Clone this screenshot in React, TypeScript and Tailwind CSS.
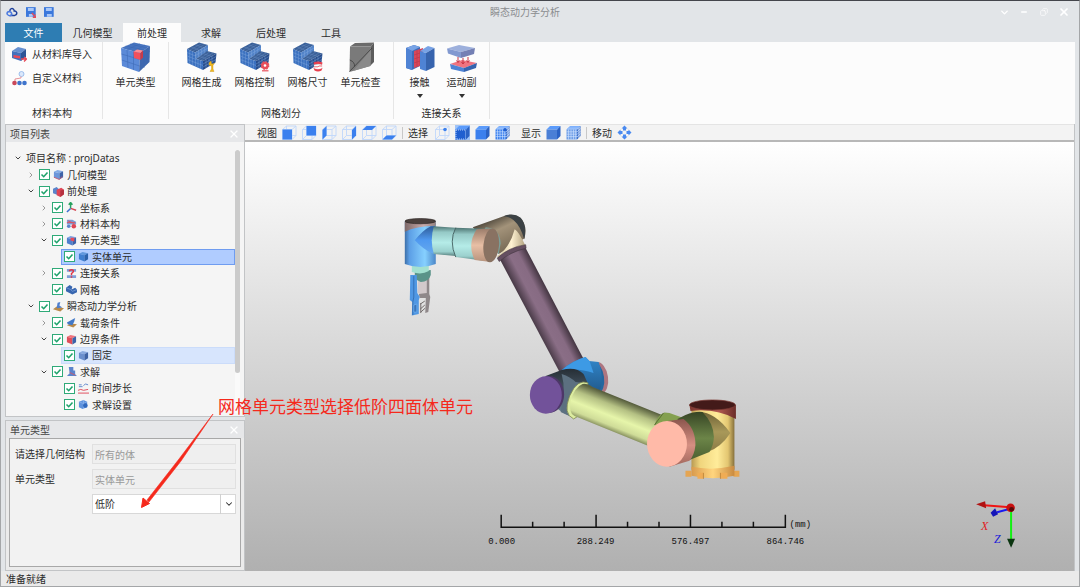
import React, { useState } from 'react';
import { ChevronDown, ChevronRight, Minus, Copy, X } from 'lucide-react';

type Face = 'front' | 'back' | 'left' | 'right' | 'top' | 'bottom';

const FACES: Record<Face, string> = {
  front: '0.5,4.5 10,4.5 10,14.5 0.5,14.5',
  back: '4.5,1 14,1 14,10.5 4.5,10.5',
  left: '0.5,5 4.5,1 4.5,10.5 0.5,14.5',
  right: '10,5 14,1 14,10.5 10,14.5',
  top: '0.5,5 4.5,1 14,1 10,5',
  bottom: '0.5,14.5 4.5,10.5 14,10.5 10,14.5',
};

const WireCube: React.FC<{ face?: Face; dot?: boolean }> = ({ face, dot }) => (
  <svg viewBox="0 0 15 15" className="w-[15px] h-[15px]">
    <path
      d="M.5 4.5H10V14.5H.5ZM4.5 1H14V10.5H4.5ZM.5 4.5L4.5 1M10 4.5L14 1M.5 14.5L4.5 10.5M10 14.5L14 10.5"
      fill="none"
      stroke="#bfd7fb"
      strokeWidth=".9"
    />
    {face && <polygon points={FACES[face]} fill="#3b80ee" />}
    {dot && <circle cx="10" cy="4.5" r="1.8" fill="#3b80ee" />}
  </svg>
);

const SolidCube: React.FC<{ front?: string; mesh?: boolean; dashed?: boolean; dot?: boolean }> = ({
  front = '#3b80ee',
  mesh,
  dashed,
  dot,
}) => (
  <svg viewBox="0 0 15 15" className="w-[15px] h-[15px]">
    <path d="M.5 4.5L4 1H14.5L11 4.5Z" fill="#5b9bfb" />
    <path d="M11 4.5L14.5 1V11L11 14.5Z" fill="#2a62c4" />
    <path d="M.5 4.5H11V14.5H.5Z" fill={front} />
    {mesh && (
      <path
        d="M2.5 4.5V14.5M5 4.5V14.5M7.5 4.5V14.5M9.7 4.5V14.5M.5 6.8H11M.5 9.2H11M.5 11.6H11M3 2H13.5M2 3.3H12.5M11 7L14.5 3.5M11 9.5L14.5 6M11 12L14.5 8.5M12.3 3V13M13.4 2V12"
        stroke="#d5e5ff"
        strokeWidth=".6"
      />
    )}
    {dashed && <path d="M1 5H10.5V14H1Z" fill="none" stroke="#cfe2ff" strokeWidth=".8" strokeDasharray="1 1" />}
    {dot && <circle cx="10" cy="4.8" r="1.7" fill="#1f5fd0" />}
  </svg>
);

const MoveIcon = () => (
  <svg viewBox="0 0 15 15" className="w-[15px] h-[15px]" fill="#4a8af0">
    <path d="M7.5.5L10.5 3.5H9V5.5H6V3.5H4.5ZM7.5 14.5L4.5 11.5H6V9.5H9V11.5H10.5ZM.5 7.5L3.5 4.5V6H5.5V9H3.5V10.5ZM14.5 7.5L11.5 10.5V9H9.5V6H11.5V4.5Z" />
  </svg>
);

const ElementTypeIcon = () => (
  <svg viewBox="0 0 30 30" className="w-[30px] h-[30px]">
    <path d="M0 6L13 .5L29 4L19 11Z" fill="#4774bf" />
    <path d="M0 6L19 11L18 30L1 24Z" fill="#5b8ad8" />
    <path d="M19 11L29 4L28.500 20L18 30Z" fill="#3f68ae" />
    <path d="M.5 12L19 17.500L29 9M.8 18L18.500 24L28.500 15M6 7.500L7 26M12.500 9.500V28M4.500 4L23 8V26M9 2L26 6V22M6 7.500L19 1.800M12.500 9.500L24 3" fill="none" stroke="#3a67b3" strokeWidth=".5" />
    <path d="M12.500 9.500L16 7.500L22 8.500L19.500 11Z" fill="#ff8c92" />
    <path d="M12.500 9.500L19.500 11V18L13 16Z" fill="#f4505c" />
    <path d="M19.500 11L22 8.500V15.500L19.500 18Z" fill="#c93a48" />
  </svg>
);

const MeshIcon: React.FC<{ badge: 'tool' | 'gear' | 'size' }> = ({ badge }) => (
  <svg viewBox="0 0 30 30" className="w-[30px] h-[30px]">
    <path d="M0 7L12 .5L21 3L8 10.500Z" fill="#3a6098" />
    <path d="M8 10.500L21 3V9L9 17Z" fill="#5283c8" />
    <path d="M9 17L20 9L29.500 11.500L16 19Z" fill="#3a6098" />
    <path d="M0 7L8 10.500L9 17L16 19V28L.5 21Z" fill="#3a70bf" />
    <path d="M16 19L29.500 11.500L28.500 20.500L16 28Z" fill="#274d8c" />
    <path
      d="M0 10.500L8.500 14M.2 14L9 17.500M.4 17.500L16 23.500M2.700 8.200V22M5.400 9.400V23.200M8.500 15V24.600M11 17.600V25.700M13.500 18.300V26.900M16 22L29 14.500M16 25L29 17.500M19 17.400V26.200M22 15.700V24.400M25 14V22.600M11.500 8.500V15.300M14.500 6.800V13.300M17.700 5V11.300M8.300 13.600L21 6"
      fill="none"
      stroke="#86abe0"
      strokeWidth=".4"
    />
    <path
      d="M4 4.800L12 8.200M8 2.600L16.500 5.800M2.700 8.200L15 1.400M5.400 9.400L18 2.200M12.500 14.500L20 16.800M16.200 11.800L24.500 14.200M11.300 17.600L23 9.800M13.600 18.300L26.500 10.700"
      fill="none"
      stroke="#6c8fc4"
      strokeWidth=".4"
    />
    {badge === 'tool' && (
      <path d="M24 19Q21.500 20 22 23L24.500 24V27L23 29.500H27L26 27V23.500L27.500 21L26 22L24.500 21.500Z" fill="#f2b91d" stroke="#c48f10" strokeWidth=".4" />
    )}
    {badge === 'gear' && (
      <g>
        <circle cx="25" cy="23.500" r="3.800" fill="#e8505c" />
        <circle cx="25" cy="23.500" r="3.800" fill="none" stroke="#e8505c" strokeWidth="1.200" strokeDasharray="1.500 1.500" />
        <circle cx="25" cy="23.500" r="1.300" fill="#fff" />
        <path d="M22 28.800H28.500" stroke="#e8505c" strokeWidth="1.200" />
      </g>
    )}
    {badge === 'size' && (
      <g>
        <path d="M20.500 20.500Q25 18.500 29.500 20.500L29 23Q25 21.500 21 23Z" fill="#e8404e" />
        <path d="M21 23Q25 21.500 29 23V26.500Q25 28 21 26.500Z" fill="#fff" stroke="#d8d8d8" strokeWidth=".4" />
        <path d="M21 24.800H25L26 24H29" fill="none" stroke="#e8404e" strokeWidth=".8" />
        <path d="M20.500 26Q25 28.500 29.500 26L28.500 28.500Q25 30.500 21.500 28.500Z" fill="#e8404e" />
      </g>
    )}
  </svg>
);

const CheckElementIcon = () => (
  <svg viewBox="0 0 30 30" className="w-[30px] h-[30px]">
    <path d="M4 4.500L9 1L28 .5L25 4.500Z" fill="#6b6b6b" />
    <path d="M4 4.500L25 4.500L24 24L3.500 30Z" fill="#7a7a7a" />
    <path d="M25 4.500L28 .5V20L24 24Z" fill="#5c5c5c" />
    <path d="M24.500 8V24L7 29Z" fill="#8a8a8a" />
    <path d="M26 6L3.500 29.500M3.800 18Q9 20 8.500 24.500" fill="none" stroke="#3d3d3d" strokeWidth=".8" />
  </svg>
);

const ContactIcon = () => (
  <svg viewBox="0 0 30 30" className="w-[30px] h-[30px]">
    <path d="M1 6L9 3L15 5V24L7 28L1 26Z" fill="#3f6cb8" />
    <path d="M1 6L9 3L15 5L7 9Z" fill="#78a3e6" />
    <path d="M1 6L7 9V28L1 26Z" fill="#4f83d4" />
    <path d="M9 9L18 6V23L9 26Z" fill="#d8475a" />
    <path d="M9 13L18 10M9 17L18 14M9 21L18 18M12 8V25M15 7V24" stroke="#b13447" strokeWidth=".5" />
    <path d="M15 9L23 4L29.500 6L21 11Z" fill="#78a3e6" />
    <path d="M15 9L21 11V29L15 27Z" fill="#4f83d4" />
    <path d="M21 11L29.500 6V25L21 29Z" fill="#3764ae" />
  </svg>
);

const JointIcon = () => (
  <svg viewBox="0 0 30 30" className="w-[30px] h-[30px]">
    <path d="M0 6.500L12 3L28 6L14 10Z" fill="#9db0dc" />
    <path d="M0 6.500L14 10V16L1 11.500Z" fill="#8299d0" />
    <path d="M14 10L28 6L27 12L14 16Z" fill="#7480b4" />
    <path d="M3 22L15 18L30 21L17 26Z" fill="#f07480" />
    <path d="M3 22L17 26V30L4 27Z" fill="#4f83d4" />
    <path d="M17 26L30 21L29 26L17 30Z" fill="#3764ae" />
    <path d="M11 15V20M16 16V22M21 15V20M9.500 18.500L11 20.500L12.500 18.500M14.500 20L16 22L17.500 20M19.500 18.500L21 20.500L22.500 18.500" fill="none" stroke="#c93444" strokeWidth="1" />
  </svg>
);

const LibraryIcon = () => (
  <svg viewBox="0 0 15 15" className="w-[15px] h-[15px]">
    <path d="M0 4L6 0L14 2L9 6Z" fill="#6690d0" />
    <path d="M0 4L9 6V14L0 11Z" fill="#4371bd" />
    <path d="M9 6L14 2V10L9 14Z" fill="#2d5597" />
    <path d="M1.500 8L8 9V11.500L1.500 10.500Z" fill="#e84a58" />
    <path d="M9 12H14M12 10L14.500 12L12 14.500" fill="none" stroke="#e84a58" strokeWidth="1.300" />
  </svg>
);

const CustomMaterialIcon = () => (
  <svg viewBox="0 0 15 15" className="w-[15px] h-[15px]">
    <circle cx="9.500" cy="3" r="2.500" fill="#dbe8fb" stroke="#8db4ea" strokeWidth=".8" />
    <path d="M9 5.500V7L3 8V10" fill="none" stroke="#e07a80" strokeWidth=".8" />
    <circle cx="2.500" cy="12" r="2.300" fill="#c9485a" />
    <circle cx="7.500" cy="12" r="2.300" fill="#3f74cc" />
    <circle cx="12.500" cy="12" r="2.300" fill="#3f74cc" />
  </svg>
);

type TreeKind =
  | 'geometry' | 'pre' | 'axes' | 'material' | 'element' | 'solid' | 'link' | 'mesh'
  | 'transient' | 'load' | 'boundary' | 'fixed' | 'solve' | 'time' | 'settings';

const MiniCube: React.FC<{ left: string; right: string; top: string }> = ({ left, right, top }) => (
  <g>
    <path d="M1 3L5 1L11 2.500L7 4.500Z" fill={top} />
    <path d="M1 3L7 4.500V11.500L1 9Z" fill={left} />
    <path d="M7 4.500L11 2.500V9L7 11.500Z" fill={right} />
  </g>
);

const treeGlyphs: Record<TreeKind, React.ReactNode> = {
  geometry: (
    <g>
      <MiniCube left="#6d96da" right="#3c63a8" top="#86abe6" />
      <path d="M1 9L7 11.500L10 8" fill="none" stroke="#c9566e" />
    </g>
  ),
  pre: (
    <g>
      <path d="M0 3L4 1L6 3V10L0 8Z" fill="#5b84cc" />
      <path d="M4 4L9 2L12 4V9L8 12L4 10Z" fill="#df4555" />
      <path d="M8 5L12 4V9L8 12Z" fill="#b5303f" />
    </g>
  ),
  axes: (
    <g fill="none" strokeWidth="1.600">
      <path d="M5 7V1M3 3L5 .5L7 3" stroke="#27a05e" />
      <path d="M5 7L11 9" stroke="#d54754" />
      <path d="M5 7L1 11" stroke="#3b6fd0" />
    </g>
  ),
  material: (
    <g>
      <path d="M1 2H7L11 4V7H1Z" fill="#7c9cd6" />
      <path d="M2 3L9 6M1 5H10" stroke="#dc5260" />
      <circle cx="3" cy="9" r="2" fill="#5b84cc" />
      <circle cx="8.500" cy="9" r="2.500" fill="#df4555" />
    </g>
  ),
  element: (
    <g>
      <MiniCube left="#4f7fce" right="#3b62a9" top="#7ba3e4" />
      <path d="M5 3L9 3V7L5 6Z" fill="#e84a58" />
    </g>
  ),
  solid: <MiniCube left="#3f7fd0" right="#2b62ab" top="#6098dd" />,
  link: (
    <g>
      <path d="M1 1H11V4H1ZM1 8H11V11H1Z" fill="#7f9fd9" />
      <path d="M3.500 3.500Q4 2 6 2Q8.500 2 8 4Q7.500 5 6 6V8M6 9V10.500" fill="none" stroke="#df3545" strokeWidth="1.600" />
    </g>
  ),
  mesh: (
    <g>
      <path d="M0 4L4 1L7 3L6 6L10 4L12 6V9L7 11.500L0 8Z" fill="#3866b0" />
      <path d="M0 4L5 6L7 8L12 6" fill="none" stroke="#84a7df" strokeWidth=".7" />
    </g>
  ),
  transient: (
    <g>
      <path d="M0 9L4 6L12 8L8 11.500Z" fill="#b98a4a" />
      <path d="M5 2L8 1L7 5L10 7L4 8Z" fill="#4f7fce" />
    </g>
  ),
  load: (
    <g>
      <path d="M1 9L5 7L12 8L8 11.500Z" fill="#b98a4a" />
      <path d="M1 6L10 1L9 5L7 9L2 8Z" fill="#4278c8" />
    </g>
  ),
  boundary: <MiniCube left="#e04d5a" right="#3b62a9" top="#f0737d" />,
  fixed: <MiniCube left="#6b8fce" right="#3f62a4" top="#89a9df" />,
  solve: (
    <g>
      <path d="M3 1H8V5H10V9L12 11H1L4 8Z" fill="#5b84cc" />
      <path d="M4 7L10 10" stroke="#cc5a6a" />
    </g>
  ),
  time: (
    <g>
      <path d="M1 2H4M6 3L8 1L11 2M1 4H5" fill="none" stroke="#5b84cc" />
      <path d="M0 8L3 7L6 8L11 7M0 11H12" fill="none" stroke="#df4555" />
    </g>
  ),
  settings: (
    <g>
      <path d="M1 3L6 1L10 3V9L5 11L1 9Z" fill="#5f93de" />
      <path d="M6 1V11M1 3L6 5L10 3" fill="none" stroke="#9dc0f2" strokeWidth=".6" />
      <circle cx="8" cy="7" r="2.500" fill="#3068bd" />
    </g>
  ),
};

interface TreeRow {
  label: string;
  level: 1 | 2 | 3;
  kind: TreeKind;
  arrow?: 'open' | 'closed';
  state?: 'selected' | 'hover';
}

const treeRows: TreeRow[] = [
  { label: '几何模型', level: 1, kind: 'geometry', arrow: 'closed' },
  { label: '前处理', level: 1, kind: 'pre', arrow: 'open' },
  { label: '坐标系', level: 2, kind: 'axes', arrow: 'closed' },
  { label: '材料本构', level: 2, kind: 'material', arrow: 'closed' },
  { label: '单元类型', level: 2, kind: 'element', arrow: 'open' },
  { label: '实体单元', level: 3, kind: 'solid', state: 'selected' },
  { label: '连接关系', level: 2, kind: 'link', arrow: 'closed' },
  { label: '网格', level: 2, kind: 'mesh' },
  { label: '瞬态动力学分析', level: 1, kind: 'transient', arrow: 'open' },
  { label: '载荷条件', level: 2, kind: 'load', arrow: 'closed' },
  { label: '边界条件', level: 2, kind: 'boundary', arrow: 'open' },
  { label: '固定', level: 3, kind: 'fixed', state: 'hover' },
  { label: '求解', level: 2, kind: 'solve', arrow: 'open' },
  { label: '时间步长', level: 3, kind: 'time' },
  { label: '求解设置', level: 3, kind: 'settings' },
];

const levelClass = { 1: 'ml-[18px]', 2: 'ml-[31px]', 3: 'ml-[55px] pl-[2px]' };

const TreeItem: React.FC<{ row: TreeRow }> = ({ row }) => {
  const [checked, setChecked] = useState(true);
  const Arrow = row.arrow === 'open' ? ChevronDown : ChevronRight;
  const stateClass =
    row.state === 'selected'
      ? 'bg-[#b0ccff] border-[#6f9cf0]'
      : row.state === 'hover'
        ? 'bg-[#d7e5fd] border-[#cbdcfa]'
        : 'border-transparent';
  return (
    <li className={`flex items-center gap-[3px] border ${levelClass[row.level]} ${stateClass}`}>
      {row.level < 3 && (
        <span className="w-[11px] flex justify-center shrink-0">
          {row.arrow && (
            <Arrow className={row.arrow === 'open' ? 'w-2 h-2 text-[#444]' : 'w-2 h-2 text-[#999]'} strokeWidth={3} />
          )}
        </span>
      )}
      <label className="flex items-center gap-[3px]">
        <span className="relative w-[11px] h-[11px] shrink-0">
          <input
            type="checkbox"
            checked={checked}
            onChange={() => setChecked(!checked)}
            className="block appearance-none w-[11px] h-[11px] border border-[#2faa78] bg-white"
          />
          {checked && (
            <svg viewBox="0 0 11 11" className="absolute inset-0 pointer-events-none">
              <path d="M2.500 5.500L4.700 7.700L8.500 3.500" fill="none" stroke="#1fa36c" strokeWidth="1.600" />
            </svg>
          )}
        </span>
        <svg viewBox="0 0 12 12" className="w-[11px] h-[11px] shrink-0">
          {treeGlyphs[row.kind]}
        </svg>
        <span>{row.label}</span>
      </label>
    </li>
  );
};

const PanelHeader: React.FC<{ title: string }> = ({ title }) => (
  <div className="h-[17px] shrink-0 flex items-center justify-between pl-1 pr-1 bg-[#e6e7e9]">
    <h2 className="text-[#444]">{title}</h2>
    <button aria-label={`关闭${title}`} className="text-white">
      <X className="w-3 h-3" strokeWidth={2.5} />
    </button>
  </div>
);

const RibbonButton: React.FC<{ label: string; icon: React.ReactNode; menu?: boolean; width?: string }> = ({
  label,
  icon,
  menu,
  width = 'w-[53px]',
}) => (
  <button className={`flex flex-col items-center ${width}`}>
    {icon}
    <span className="leading-5">{label}</span>
    {menu && (
      <svg viewBox="0 0 6 4" className="w-[6px] h-1 mt-[2px]">
        <path d="M0 0H6L3 4Z" fill="#333" />
      </svg>
    )}
  </button>
);

const RibbonGroup: React.FC<{ title?: string; className: string; children: React.ReactNode }> = ({
  title,
  className,
  children,
}) => (
  <section className={`h-[77px] flex flex-col justify-between border-r border-[#e6e6e6] ${className}`}>
    {children}
    {title && <p className="text-center leading-3">{title}</p>}
  </section>
);

const tabs = [
  { label: '文件', className: 'w-[57px] bg-[#2e7db3] text-white' },
  { label: '几何模型', className: 'w-[61px]' },
  { label: '前处理', className: 'w-[58px] bg-[#fcfcfc]' },
  { label: '求解', className: 'w-[60px]' },
  { label: '后处理', className: 'w-[60px]' },
  { label: '工具', className: 'w-[60px]' },
];

const viewFaces: { label: string; face: Face }[] = [
  { label: '前视图', face: 'front' },
  { label: '后视图', face: 'back' },
  { label: '左视图', face: 'left' },
  { label: '右视图', face: 'right' },
  { label: '俯视图', face: 'top' },
  { label: '仰视图', face: 'bottom' },
];

const Scene = () => (
  <svg viewBox="245 142 830 429" className="absolute inset-0 w-full h-full" role="img" aria-label="机械臂模型">
    <defs>
      <linearGradient id="head" x1="0" x2="1">
        <stop offset="0" stopColor="#3d6fa8" />
        <stop offset=".15" stopColor="#5c9fe6" />
        <stop offset=".65" stopColor="#86d0ff" />
        <stop offset="1" stopColor="#4b86c8" />
      </linearGradient>
      <linearGradient id="headBand" x1="0" x2="1">
        <stop offset="0" stopColor="#7d6868" />
        <stop offset=".6" stopColor="#c9abaa" />
        <stop offset="1" stopColor="#94807d" />
      </linearGradient>
      <linearGradient id="teal" x1="0" y1="0" x2="0" y2="1">
        <stop offset="0" stopColor="#4d7472" />
        <stop offset=".2" stopColor="#95c9c6" />
        <stop offset=".55" stopColor="#b5ece8" />
        <stop offset=".85" stopColor="#9bd0cd" />
        <stop offset="1" stopColor="#567d7b" />
      </linearGradient>
      <linearGradient id="flare" x1="0" y1="0" x2="0" y2="1">
        <stop offset="0" stopColor="#2f5c98" />
        <stop offset=".5" stopColor="#4f99f0" />
        <stop offset="1" stopColor="#66a9ee" />
      </linearGradient>
      <linearGradient id="tan" x1="0" y1="0" x2="0" y2="1">
        <stop offset="0" stopColor="#9a7b69" />
        <stop offset=".5" stopColor="#e8bfa5" />
        <stop offset="1" stopColor="#b7927c" />
      </linearGradient>
      <linearGradient id="elbow" gradientUnits="userSpaceOnUse" x1="492" y1="216" x2="508" y2="250">
        <stop offset="0" stopColor="#453f35" />
        <stop offset=".4" stopColor="#a3937a" />
        <stop offset="1" stopColor="#786a55" />
      </linearGradient>
      <linearGradient id="cream" x1="0" x2="1">
        <stop offset="0" stopColor="#d5c59f" />
        <stop offset=".5" stopColor="#fff2d2" />
        <stop offset="1" stopColor="#b0a07e" />
      </linearGradient>
      <linearGradient id="upper" gradientUnits="userSpaceOnUse" x1="530" y1="315" x2="555" y2="302">
        <stop offset="0" stopColor="#4b3c49" />
        <stop offset=".35" stopColor="#8a6e86" />
        <stop offset=".65" stopColor="#876b83" />
        <stop offset="1" stopColor="#3f323d" />
      </linearGradient>
      <linearGradient id="lower" gradientUnits="userSpaceOnUse" x1="621" y1="399" x2="608" y2="432">
        <stop offset="0" stopColor="#59603f" />
        <stop offset=".25" stopColor="#b4c083" />
        <stop offset=".55" stopColor="#e6f5aa" />
        <stop offset=".8" stopColor="#cfdc98" />
        <stop offset="1" stopColor="#6a7248" />
      </linearGradient>
      <linearGradient id="slate" x1="0" y1="0" x2="0" y2="1">
        <stop offset="0" stopColor="#262e35" />
        <stop offset=".6" stopColor="#516474" />
        <stop offset="1" stopColor="#6c8496" />
      </linearGradient>
      <linearGradient id="blueJoint" x1="0" y1="0" x2="0" y2="1">
        <stop offset="0" stopColor="#3388cc" />
        <stop offset="1" stopColor="#20598c" />
      </linearGradient>
      <linearGradient id="olive" x1="0" y1="0" x2="0" y2="1">
        <stop offset="0" stopColor="#364424" />
        <stop offset=".55" stopColor="#6c8548" />
        <stop offset="1" stopColor="#4c6031" />
      </linearGradient>
      <linearGradient id="khaki" x1="0" y1="0" x2="0" y2="1">
        <stop offset="0" stopColor="#6e6236" />
        <stop offset=".5" stopColor="#a89859" />
        <stop offset="1" stopColor="#8a7b45" />
      </linearGradient>
      <linearGradient id="base" x1="0" x2="1">
        <stop offset="0" stopColor="#b99a52" />
        <stop offset=".2" stopColor="#f0d57d" />
        <stop offset=".6" stopColor="#ffec9a" />
        <stop offset=".85" stopColor="#e3c671" />
        <stop offset="1" stopColor="#86703b" />
      </linearGradient>
      <linearGradient id="foot" x1="0" x2="1">
        <stop offset="0" stopColor="#d99a4c" />
        <stop offset=".5" stopColor="#ffd57e" />
        <stop offset="1" stopColor="#c98a40" />
      </linearGradient>
      <linearGradient id="cap" x1="0" x2="1">
        <stop offset="0" stopColor="#7c352f" />
        <stop offset=".6" stopColor="#b55c53" />
        <stop offset="1" stopColor="#6b2d29" />
      </linearGradient>
      <linearGradient id="disc" x1="0" y1="0" x2="0" y2="1">
        <stop offset="0" stopColor="#8b554d" />
        <stop offset=".55" stopColor="#d68f82" />
        <stop offset="1" stopColor="#9f665c" />
      </linearGradient>
    </defs>

    {/* gripper */}
    <path d="M418 281L427 279L427.500 295L424 296L418 293Z" fill="#d2c9cb" />
    <path d="M427 273L429.500 274V294L430.500 297L428.500 312L425.500 313L426 298L420 298L419 294L427 293Z" fill="#8f888a" />
    <path d="M420.500 304L425 301M420.500 309L425 305M421 312L425.500 308M421 303V313" stroke="#66605f" strokeWidth=".9" />
    <path d="M415 272L431 270L431 275Q429 282 421 282L415 279Z" fill="#5a9389" />
    <path d="M412 266H429V271Q422 275 412 272Z" fill="#a3e0d0" />
    <path d="M410.500 275L417 275L417.500 293L420 297L419 300V314L412 315.500L412.500 302L410 300Z" fill="#4f97e3" />
    <path d="M414 276V297L413 302V315" fill="none" stroke="#2e66a8" strokeWidth=".8" />
    <path d="M414 305L417 304V312L414 312Z" fill="#3a75bc" stroke="#79b9f7" strokeWidth=".6" />

    {/* wrist */}
    <path d="M405 221H436V264Q420.500 270 405 264Z" fill="url(#head)" />
    <path d="M405 221H436V225.500Q416 226 405 231.500Z" fill="url(#headBand)" />
    <ellipse cx="420.500" cy="221" rx="15.300" ry="2.600" fill="#4b403d" stroke="#2f2827" strokeWidth=".7" />
    <path d="M415 240Q423 230 431 226H435Q431 240 434 254Q423 249 415 240Z" fill="url(#flare)" />

    {/* elbow */}
    <path d="M473 227L501 217Q511 212 520 217Q528 224 525 238L499 254Z" fill="url(#elbow)" />
    <path d="M504 216Q514 212 521 217.500Q528 225 524.500 239Q521 226 514 220Q509 216 504 216Z" fill="#3b4144" />
    <path d="M486 227Q500 228 501 243L499 254L478 240Z" fill="#7c9f98" />
    <path d="M515 229Q519 231 526 246L522 249Q510 251 499 259L497.500 256Q510 248 515 229Z" fill="url(#cream)" />

    {/* forearm */}
    <path d="M434 226L456 227.500V256L434 254Q430 240 434 226Z" fill="url(#teal)" />
    <path d="M456 227.500L485 228.500L486 261L456 257Q449 242 456 227.500Z" fill="url(#teal)" />
    <path d="M456 227.500Q449 241 456 257" fill="none" stroke="#425e5d" strokeWidth=".9" />
    <path d="M477 229L491 228.300V262L475 260Q467 244 477 229Z" fill="url(#tan)" />
    <ellipse cx="491.500" cy="245.300" rx="7.800" ry="17" fill="#897262" transform="rotate(5 491.500 245.300)" />

    {/* upper arm */}
    <path d="M500 259L525 246L584 359L561 374Z" fill="url(#upper)" />
    <path d="M497.500 258Q509 247 526 244.500L526.500 248Q510 252 499.500 261.500Z" fill="#654f61" stroke="#3c303a" strokeWidth=".5" />

    {/* middle joint */}
    <ellipse cx="599.500" cy="378" rx="9" ry="16" fill="#ae7680" transform="rotate(-8 599.500 378)" />
    <ellipse cx="596.500" cy="378" rx="8" ry="15.500" fill="#25679f" transform="rotate(-8 596.500 378)" />
    <path d="M561 371Q571 361 586 357L589.500 361L599 362Q604 374 601 389L597 393L580 389Z" fill="url(#blueJoint)" />
    <path d="M586 357L590 361L594 373Q577 367 561 371Q572 361 586 357Z" fill="#3d9ae5" />
    <path d="M546 376L562 370Q576 366 584 374L588 383L575 417Q565 415 557 408Z" fill="url(#slate)" />
    <path d="M562 374Q571 377 576 382L584 383L574 418L561 412Q567 392 562 374Z" fill="#5c7080" />
    <ellipse cx="549.500" cy="394.500" rx="15" ry="18.500" fill="#4d3768" />
    <ellipse cx="546.200" cy="395" rx="16" ry="18.700" fill="#72529a" />

    {/* lower arm */}
    <path d="M588.500 383Q578 378 570 396Q563 414 574 419L579 416L588 386Z" fill="#dceca0" stroke="#7d8753" strokeWidth=".8" />
    <path d="M583 384Q575 387 571 401Q569 414 575 416L649 446L665 416L593 387Q587 383 583 384Z" fill="url(#lower)" />

    {/* base */}
    <path d="M686 471H692V477H686ZM734 471H740V477H734Z" fill="#e5a552" />
    <path d="M692 406H735V470H692Z" fill="url(#base)" />
    <path d="M692 467Q713 471 735 466V476Q713 481 692 476Z" fill="url(#foot)" />
    <path d="M698 473H704V479H698ZM721 473H728V479H721Z" fill="#efac55" />
    <path d="M704 473V479M721 473V479" stroke="#b07a34" strokeWidth=".7" />
    <path d="M690 405H736.500V419Q716 408 691 411Z" fill="url(#cap)" />
    <ellipse cx="713" cy="405" rx="23" ry="5" fill="#431a19" stroke="#7c3b36" strokeWidth=".7" />
    <path d="M698 412Q715 411 731 433Q721 448 708 452L700 448Z" fill="url(#khaki)" />
    <path d="M655 425Q658 415 665 412.500L670 413L684 418L678 440Z" fill="#84a04f" />
    <path d="M655 425L664 413" stroke="#4e6030" strokeWidth=".8" />
    <path d="M678 419L686 415Q696 411 703 412Q714 423 714.500 437Q714 446 710 452L690 460Z" fill="url(#olive)" />
    <path d="M668 421L684 419Q696 428 696 445Q695 455 690 461L670 467Z" fill="url(#disc)" />
    <ellipse cx="667.500" cy="444" rx="20" ry="22.800" fill="#ffbaa8" />

    {/* scale */}
    <path
      d="M501.500 515V527.500H786V515M596.500 515V527M691 515V527M533 522V527M564.500 522V527M628 522V527M659.500 522V527M722.500 522V527M754 522V527"
      fill="none"
      stroke="#111"
      strokeWidth="1.500"
    />
    <g className="font-['Liberation_Mono',monospace] text-[9px]" fill="#111" textAnchor="middle">
      <text x="502" y="544">0.000</text>
      <text x="596" y="544">288.249</text>
      <text x="691" y="544">576.497</text>
      <text x="786" y="544">864.746</text>
      <text x="801" y="527">(mm)</text>
    </g>

    {/* axis triad */}
    <path d="M1012 509V540" stroke="#12f012" strokeWidth="2" />
    <path d="M1008 539H1016L1012 548Z" fill="#0b3510" />
    <path d="M1011 509L998 512.500" stroke="#1818f0" strokeWidth="2" />
    <path d="M991.500 513L996 508.500L999 514.500L994 517Z" fill="#1414b8" />
    <path d="M1011 507.500L985 505.500" stroke="#f01414" strokeWidth="2" />
    <path d="M977 504.500L986 501.500L987 508.500Z" fill="#b01212" />
    <circle cx="1011.500" cy="508" r="4.300" fill="#c81010" />
    <circle cx="1012.500" cy="509.500" r="2.400" fill="#5a0808" />
    <g className="font-['Liberation_Serif',serif] text-[12px] italic">
      <text x="982" y="530" fill="#e02020">X</text>
      <text x="995" y="543" fill="#2020d8">Z</text>
    </g>
  </svg>
);

const ToolSeparator = () => <span className="w-px h-3 bg-[#c8c8c8]" />;

export default function App() {
  return (
    <div className="relative min-h-screen flex flex-col px-1 border border-[#a4a6a8] border-t-[#44464c] bg-[#e2e5e8] text-[10px] leading-4 text-[#2c2c2c] font-['Noto_Sans','Noto_Sans_CJK_SC',sans-serif]">
      {/* Title bar */}
      <header className="h-[22px] flex items-center">
        <div className="w-[50px] flex items-center gap-[7px] pl-px">
          <svg viewBox="0 0 12 12" className="w-3 h-3" fill="none" strokeWidth="1.500">
            <path d="M4 9.500H9Q11.500 9 11 6.500Q10 4.500 8.500 5Q8 2 5.500 2.500Q4 3 4 5" stroke="#1d3f9a" />
            <path d="M1 8Q1 5.500 3.500 5.500Q6 6 6 9Q3 11 1 8Z" stroke="#4c7be0" />
          </svg>
          <svg viewBox="0 0 12 12" className="w-3 h-3">
            <path d="M1 1H11V11H1Z" fill="#3b78dc" />
            <path d="M3 2H9V5H3ZM4 8H8V11H4Z" fill="#a9c8f8" />
            <path d="M7 7L11.500 11.500M11.500 8V11.500H8" stroke="#e84a58" strokeWidth="1.400" fill="none" />
          </svg>
          <svg viewBox="0 0 12 12" className="w-3 h-3">
            <path d="M1 1H11V11H1Z" fill="#3b78dc" />
            <path d="M3 2H9V5H3ZM4 8H9V11H4Z" fill="#a9c8f8" />
          </svg>
        </div>
        <h1 className="flex-1 text-center text-[#8a8c8f]">瞬态动力学分析</h1>
        <div className="w-20 flex items-center justify-end gap-2 pr-[5px] text-white">
          <button aria-label="收起" className="w-3 flex justify-center"><ChevronDown className="w-[11px] h-[11px]" strokeWidth={3} /></button>
          <button aria-label="最小化" className="w-3 flex justify-center"><Minus className="w-2 h-2" strokeWidth={4} /></button>
          <button aria-label="还原" className="w-3 flex justify-center"><Copy className="w-2 h-2 -scale-x-100" strokeWidth={2} /></button>
          <button aria-label="关闭" className="w-3 flex justify-center"><X className="w-3 h-3" strokeWidth={3.5} /></button>
        </div>
      </header>

      {/* Tabs */}
      <nav className="h-[19px] flex">
        {tabs.map((tab) => (
          <button key={tab.label} className={tab.className}>
            {tab.label}
          </button>
        ))}
      </nav>

      {/* Ribbon */}
      <div className="h-[82px] shrink-0 flex bg-[#fcfcfc]">
        <RibbonGroup title="材料本构" className="w-[98px] pr-[3px]">
          <div className="pl-[7px]">
            <button className="h-6 flex items-center gap-[5px]">
              <LibraryIcon />
              从材料库导入
            </button>
            <button className="h-6 flex items-center gap-[5px]">
              <CustomMaterialIcon />
              自定义材料
            </button>
          </div>
        </RibbonGroup>
        <RibbonGroup className="w-[66px] items-center">
          <RibbonButton label="单元类型" icon={<ElementTypeIcon />} />
        </RibbonGroup>
        <RibbonGroup title="网格划分" className="w-[225px]">
          <div className="flex justify-center">
            <RibbonButton label="网格生成" icon={<MeshIcon badge="tool" />} />
            <RibbonButton label="网格控制" icon={<MeshIcon badge="gear" />} />
            <RibbonButton label="网格尺寸" icon={<MeshIcon badge="size" />} />
            <RibbonButton label="单元检查" icon={<CheckElementIcon />} />
          </div>
        </RibbonGroup>
        <RibbonGroup title="连接关系" className="w-[96px]">
          <div className="flex justify-center pr-[2px]">
            <RibbonButton label="接触" icon={<ContactIcon />} width="w-[42px]" menu />
            <RibbonButton label="运动副" icon={<JointIcon />} width="w-[42px]" menu />
          </div>
        </RibbonGroup>
      </div>

      <div className="flex-1 flex">
        {/* Side panels */}
        <aside className="w-[240px] shrink-0 flex flex-col gap-[3px]">
          <section className="border border-[#c2c4c6] bg-[#f5f5f5]">
            <PanelHeader title="项目列表" />
            <div className="flex pt-2 pb-[3px] pr-1">
              <ul className="flex-1 grid auto-rows-fr h-[263px]">
                <li className="ml-[7px] flex items-center gap-[3px]">
                  <ChevronDown className="w-[10px] h-2 text-[#444]" strokeWidth={3} />
                  项目名称 : projDatas
                </li>
                {treeRows.map((row) => (
                  <TreeItem key={row.label} row={row} />
                ))}
              </ul>
              <div className="w-[5px] bg-[#fafafa]">
                <div className="h-[223px] rounded-sm bg-[#cbcbcb]" />
              </div>
            </div>
          </section>

          <section className="flex-1 flex flex-col border border-[#c2c4c6] bg-[#ebebeb]">
            <PanelHeader title="单元类型" />
            <form className="flex-1 mx-[3px] mb-[3px] pl-[5px] pr-1 pt-[5px] border border-[#a8a8a8] bg-[#f2f2f2] grid grid-cols-[77px_1fr] auto-rows-[20px] gap-y-[5px] items-center content-start">
              <label htmlFor="geometry">请选择几何结构</label>
              <input id="geometry" disabled defaultValue="所有的体" className="w-full min-w-0 h-5 px-[2px] border border-[#e0e0e0] bg-[#efefef] text-[#999]" />
              <label htmlFor="element">单元类型</label>
              <input id="element" disabled defaultValue="实体单元" className="w-full min-w-0 h-5 px-[2px] border border-[#e0e0e0] bg-[#efefef] text-[#999]" />
              <div className="relative col-start-2">
                <select aria-label="单元阶次" defaultValue="低阶" className="block w-full h-5 px-[2px] appearance-none border border-[#d8d8d8] bg-white">
                  <option>低阶</option>
                  <option>高阶</option>
                </select>
                <span className="absolute right-0 inset-y-0 w-4 flex items-center justify-center border-l border-[#d0d0d0] pointer-events-none">
                  <ChevronDown className="w-[10px] h-[10px]" strokeWidth={2.5} />
                </span>
              </div>
            </form>
          </section>
        </aside>

        {/* Work area */}
        <main className="flex-1 min-w-0 flex flex-col border-r border-[#c2c4c6]">
          <div className="h-[18px] shrink-0 flex items-center gap-[5px] pl-3 border-b-2 border-[#b8b8b8] border-t border-t-[#e4e4e4] bg-[#f3f3f3]">
            <span>视图</span>
            {viewFaces.map((view) => (
              <button key={view.face} aria-label={view.label}>
                <WireCube face={view.face} />
              </button>
            ))}
            <ToolSeparator />
            <span>选择</span>
            <div className="flex gap-[5px] pl-[2px]">
              <button aria-label="选择点"><WireCube dot /></button>
              <button aria-label="选择面" aria-pressed="true" className="bg-[#9fc3f7]"><SolidCube front="#1f5fd0" dashed /></button>
              <button aria-label="选择体"><SolidCube /></button>
              <button aria-label="选择节点"><SolidCube mesh dot /></button>
            </div>
            <span className="pl-[6px]">显示</span>
            <button aria-label="显示实体"><SolidCube front="#4a7fd6" /></button>
            <button aria-label="显示网格"><SolidCube front="#6f9fe8" mesh /></button>
            <ToolSeparator />
            <span>移动</span>
            <button aria-label="移动视图"><MoveIcon /></button>
          </div>
          <div className="relative flex-1 bg-linear-to-b from-white to-[#b0b0b0]">
            <Scene />
          </div>
        </main>
      </div>

      {/* Status bar */}
      <footer className="h-[15px] shrink-0 -mx-1 pl-[5px] flex items-center bg-[#eaeaea]">准备就绪</footer>

      {/* Annotation */}
      <p className="absolute left-[217px] top-[394px] text-[17px] leading-6 text-[#f5291c] whitespace-nowrap pointer-events-none">
        网格单元类型选择低阶四面体单元
      </p>
      <svg viewBox="0 0 74 96" className="absolute left-[140px] top-[413px] w-[74px] h-24 pointer-events-none">
        <path d="M72 0L38 45L6 86L8 88L40 47Z" fill="#f5291c" stroke="#f5291c" strokeWidth=".6" />
        <path d="M.5 93.500L2 84L8.500 89.500Z" fill="#f5291c" stroke="#f5291c" />
      </svg>
    </div>
  );
}
